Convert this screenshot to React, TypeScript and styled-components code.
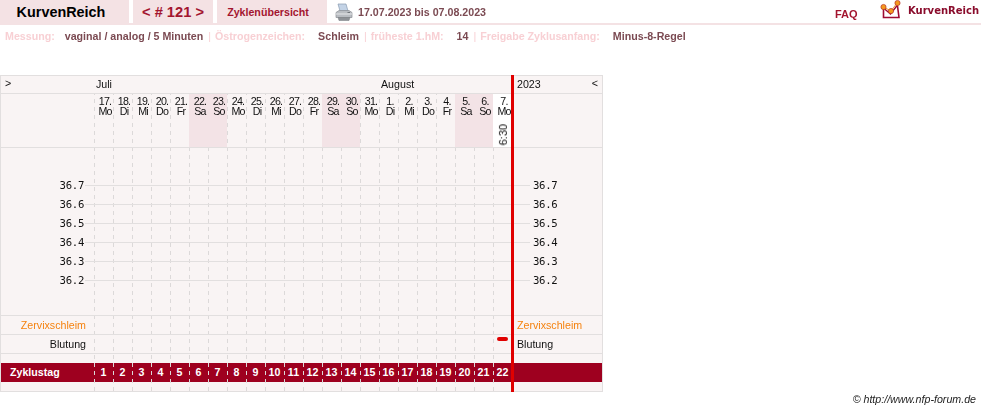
import styled, {createGlobalStyle, css} from "styled-components"

const days=[
    ["17.","Mo"],["18.","Di"],["19.","Mi"],["20.","Do"],["21.","Fr"],["22.","Sa"],["23.","So"],
    ["24.","Mo"],["25.","Di"],["26.","Mi"],["27.","Do"],["28.","Fr"],["29.","Sa"],["30.","So"],
    ["31.","Mo"],["1.","Di"],["2.","Mi"],["3.","Do"],["4.","Fr"],["5.","Sa"],["6.","So"],["7.","Mo"],
]
const temps=["36.7","36.6","36.5","36.4","36.3","36.2"]

const Logo=()=>(
    <svg width="22" height="20" viewBox="0 0 22 20">
        <path d="M3.5 9v8.5h15.5L17.5 6" fill="none" stroke="#9e0b33" strokeWidth="1.6"/>
        <path d="M3.5 8l7 6 7-9" fill="none" stroke="#9e0b33" strokeWidth="1.4"/>
        <path d="M3.5 7l7.5 4 6-8" fill="none" stroke="#f0a030" strokeWidth="1"/>
        <circle cx="3.5" cy="7" r="2.6" fill="#f39a1e" stroke="#b8322a" strokeWidth=".7"/>
        <circle cx="11" cy="11" r="2.6" fill="#f39a1e" stroke="#b8322a" strokeWidth=".7"/>
        <circle cx="17.5" cy="3" r="2.6" fill="#f39a1e" stroke="#b8322a" strokeWidth=".7"/>
    </svg>
)

const Printer=()=>(
    <svg width="18" height="19" viewBox="0 0 18 19">
        <path d="M3 1h8l2 7H5z" fill="#c3d3e6" stroke="#8a9bb0" strokeWidth=".7"/>
        <path d="M1 9.5l3-2h10l3 2v5H1z" fill="#b9bdc2" stroke="#8d9196" strokeWidth=".7"/>
        <path d="M1 11h16" stroke="#e6e8ea" strokeWidth="1"/>
        <path d="M3 14.5h12l-1 3H4z" fill="#8e9297" stroke="#74787c" strokeWidth=".5"/>
        <rect x="12.5" y="9" width="2.5" height="1" fill="#70757a"/>
    </svg>
)

const App=()=>{
    return (
        <Page>
            <GlobalStyle/>
            <Header>
                <BrandTab>KurvenReich</BrandTab>
                <NavTab>&lt; # 121 &gt;</NavTab>
                <LinkTab>Zyklenübersicht</LinkTab>
                <PrintBtn><Printer/></PrintBtn>
                <DateRange>17.07.2023 bis 07.08.2023</DateRange>
                <Faq>FAQ</Faq>
                <LogoBox><Logo/><LogoText>KurvenReich</LogoText></LogoBox>
            </Header>
            <Meta>
                <MetaLabel $gap={10}>Messung:</MetaLabel><MetaValue>vaginal / analog / 5 Minuten</MetaValue>
                <Sep>|</Sep>
                <MetaLabel $gap={13}>Östrogenzeichen:</MetaLabel><MetaValue>Schleim</MetaValue>
                <Sep>|</Sep>
                <MetaLabel $gap={13}>früheste 1.hM:</MetaLabel><MetaValue>14</MetaValue>
                <Sep>|</Sep>
                <MetaLabel $gap={13}>Freigabe Zyklusanfang:</MetaLabel><MetaValue>Minus-8-Regel</MetaValue>
            </Meta>
            <Chart>
                <DashLayer>
                    {days.map((d,i)=><DashCol key={i}/>)}
                </DashLayer>
                <MonthRow>
                    <Arrow>&gt;</Arrow>
                    <Month $col={2}>Juli</Month>
                    <Month $col={17}>August</Month>
                    <YearCell>2023<span>&lt;</span></YearCell>
                </MonthRow>
                <DayRow>
                    <span/>
                    {days.map((d,i)=>(
                        <DayCell key={i} $weekend={d[1]=="Sa"||d[1]=="So"} $last={i==days.length-1}>
                            <DayText><b>{d[0]}</b>{d[1]}</DayText>
                            {i==days.length-1 && <Time>6:30</Time>}
                        </DayCell>
                    ))}
                </DayRow>
                <Plot>
                    {temps.map((t)=>(
                        <TempRow key={t}>
                            <TempLabel>{t}</TempLabel>
                            <Rule/>
                            <TempRight>{t}</TempRight>
                        </TempRow>
                    ))}
                </Plot>
                <LabelRow>
                    <RowName $color="#f5820f">Zervixschleim</RowName>
                    <RightName $color="#f5820f">Zervixschleim</RightName>
                </LabelRow>
                <LabelRow>
                    <RowName>Blutung</RowName>
                    <BleedCell><Bleed/></BleedCell>
                    <RightName>Blutung</RightName>
                </LabelRow>
                <Spacer/>
                <Band>
                    <BandTitle>Zyklustag</BandTitle>
                    {days.map((d,i)=><BandNum key={i}>{i+1}</BandNum>)}
                </Band>
                <Foot/>
                <RedLine/>
            </Chart>
            <Credit>© http://www.nfp-forum.de</Credit>
        </Page>
    )
}

export default App

// own layer without background, so the text gets plain grey antialiasing
const grayText=css`
    will-change:transform;
`

const GlobalStyle=createGlobalStyle`
    html,body{
        margin:0;
        padding:0;
        background:#fff;
    }
    *{
        box-sizing:border-box;
    }
`

const Page=styled.div`
    width:981px;
    height:411px;
    overflow:hidden;
    font-family:"Liberation Sans",Arial,sans-serif;
    font-size:10.67px;
    color:#111;
`

const Header=styled.div`
    display:flex;
    height:25px;
    border-bottom:2px solid #f4e2e4;
    gap:4px;
`

const Tab=styled.div`
    height:23px;
    background:#f4e2e4;
    display:flex;
    align-items:center;
    justify-content:center;
    font-weight:bold;
`

const BrandTab=styled(Tab)`
    width:129px;
    font-size:14.4px;
    padding-right:7px;
    color:#000;
`

const NavTab=styled(Tab)`
    width:80px;
    font-size:14.67px;
    color:#a3152f;
`

const LinkTab=styled(Tab)`
    width:110px;
    padding-right:8px;
    color:#a3152f;
`

const PrintBtn=styled.div`
    margin-left:4px;
    padding-top:3px;
    width:19px;
`

const DateRange=styled.div`
    ${grayText}
    padding-top:6px;
    font-weight:bold;
    color:#7b4a52;
`

const Faq=styled.div`
    ${grayText}
    margin-left:auto;
    margin-top:8px;
    font-size:11px;
    font-weight:bold;
    color:#a3152f;
`

const LogoBox=styled.div`
    display:flex;
    width:101px;
    margin-left:18px;
    align-items:flex-start;
`

const LogoText=styled.span`
    ${grayText}
    font-family:"DejaVu Sans",sans-serif;
    font-weight:bold;
    font-size:10px;
    margin:5px 0 0 6px;
    color:#8a0c2c;
    white-space:nowrap;
`

const Meta=styled.div`
    ${grayText}
    display:flex;
    height:50px;
    padding:5px 0 0 5px;
    font-weight:bold;
    white-space:nowrap;
`

const MetaLabel=styled.span<{$gap:number}>`
    color:#f8d0d4;
    margin-right:${(p)=>p.$gap}px;
`

const MetaValue=styled.span`
    color:#7b4a52;
`

const Sep=styled.span`
    color:#f8d0d4;
    font-weight:normal;
    margin:0 4px 0 5px;
`

const Chart=styled.div`
    position:relative;
    width:603px;
    height:317px;
    background:#f9f4f4;
    border:1px solid #e2dfdf;
`

const DashLayer=styled.div`
    position:absolute;
    left:93px;
    top:18px;
    bottom:0;
    display:flex;
`

const DashCol=styled.div`
    width:19px;
    background:linear-gradient(#dcd9d9 50%,transparent 50%) left 5px / 1px 8px repeat-y;
`

const RedLine=styled.div`
    position:absolute;
    left:510px;
    top:-1px;
    bottom:-1px;
    width:3px;
    background:#e00000;
`

const gridColumns="93px repeat(22,19px) 1fr"

const MonthRow=styled.div`
    ${grayText}
    display:grid;
    grid-template-columns:${gridColumns};
    height:18px;
    border-bottom:1px solid #e2dfdf;
    line-height:17px;
`

const Arrow=styled.div`
    padding-left:4px;
    line-height:14px;
    grid-column:1;
    grid-row:1;
`

const Month=styled.div<{$col:number}>`
    grid-column:${(p)=>p.$col} / span 6;
    grid-row:1;
    padding-left:2px;
`

const YearCell=styled.div`
    grid-column:24;
    grid-row:1;
    display:flex;
    justify-content:space-between;
    padding:0 4px 0 5px;

    span{
        line-height:14px;
    }
`

const DayRow=styled.div`
    display:grid;
    grid-template-columns:${gridColumns};
    height:54px;
    border-bottom:1px solid #e2dfdf;
    position:relative;
`

const DayCell=styled.div<{$weekend?:boolean;$last?:boolean}>`
    background:${(p)=>p.$last ? "#fff" : p.$weekend ? "#f3e3e6" : "transparent"};
    width:19px;
    text-align:center;
    font-size:10.67px;
    line-height:10px;
    letter-spacing:-0.8px;
    padding:2px 0 0 3px;
    position:relative;
`

const DayText=styled.div`
    ${grayText}

    b{
        display:block;
        font-weight:normal;
    }
`

const Time=styled.div`
    ${grayText}
    writing-mode:vertical-rl;
    transform:rotate(180deg);
    position:absolute;
    left:5px;
    bottom:2px;
    font-size:11px;
    line-height:11px;
    letter-spacing:0;
`

const Plot=styled.div`
    height:168px;
    padding-top:28px;
    border-bottom:1px solid #e2dfdf;
    position:relative;
`

const TempRow=styled.div`
    ${grayText}
    display:flex;
    align-items:center;
    height:19px;
`

const TempLabel=styled.span`
    width:84px;
    text-align:right;
    padding-right:1px;
    font-family:"DejaVu Sans Mono",monospace;
    letter-spacing:-0.3px;
`

const Rule=styled.div`
    flex:1;
    height:1px;
    background:#e2dfdf;
`

const TempRight=styled.span`
    width:72px;
    padding-left:3px;
    font-family:"DejaVu Sans Mono",monospace;
    letter-spacing:-0.3px;
`

const LabelRow=styled.div`
    ${grayText}
    display:grid;
    grid-template-columns:${gridColumns};
    height:19px;
    border-bottom:1px solid #e2dfdf;
    line-height:18px;
`

const RowName=styled.div<{$color?:string}>`
    grid-column:1;
    grid-row:1;
    text-align:right;
    padding-right:8px;
    color:${(p)=>p.$color || "#111"};
`

const RightName=styled.div<{$color?:string}>`
    grid-column:24;
    grid-row:1;
    padding-left:5px;
    color:${(p)=>p.$color || "#111"};
`

const BleedCell=styled.div`
    grid-column:23;
    grid-row:1;
`

const Bleed=styled.div`
    width:11px;
    height:4px;
    margin:2px 0 0 4px;
    border-radius:2px;
    background:#e00000;
`

const Spacer=styled.div`
    height:9px;
`

const Band=styled.div`
    display:grid;
    grid-template-columns:${gridColumns};
    height:19px;
    background:#9e001f;
    color:#fff;
    font-weight:bold;
    line-height:19px;
`

const BandTitle=styled.div`
    padding-left:9px;
`

const BandNum=styled.div`
    text-align:center;
`

const Foot=styled.div`
    height:8px;
`

const Credit=styled.div`
    ${grayText}
    text-align:right;
    padding:1px 5px 0 0;
    font-style:italic;
    font-size:10.67px;
    color:#222;
`
